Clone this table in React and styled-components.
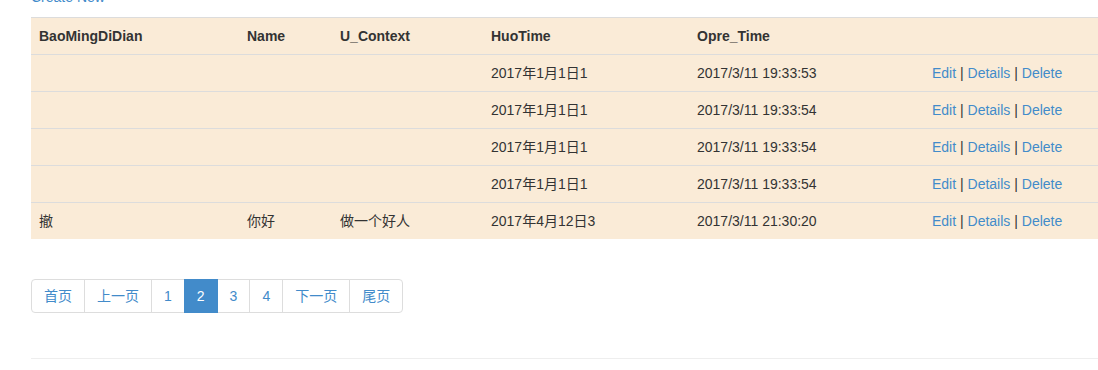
import styled, { createGlobalStyle } from "styled-components";

const GlobalStyle = createGlobalStyle`
  html, body {
    margin: 0;
    padding: 0;
    background: #fff;
    overflow: hidden;
  }
  body {
    font-family: "Liberation Sans", Arial, "Noto Sans CJK SC", sans-serif;
    font-size: 14px;
    line-height: 1.42857143;
    color: #333;
  }
`;

const columns = [
  { key: "place", title: "BaoMingDiDian", width: 208 },
  { key: "name", title: "Name", width: 93 },
  { key: "context", title: "U_Context", width: 151 },
  { key: "huo", title: "HuoTime", width: 206 },
  { key: "opre", title: "Opre_Time", width: 235 },
  { key: "actions", title: "" },
];

const rows = [
  { id: 1, place: "", name: "", context: "", huo: "2017年1月1日1", opre: "2017/3/11 19:33:53" },
  { id: 2, place: "", name: "", context: "", huo: "2017年1月1日1", opre: "2017/3/11 19:33:54" },
  { id: 3, place: "", name: "", context: "", huo: "2017年1月1日1", opre: "2017/3/11 19:33:54" },
  { id: 4, place: "", name: "", context: "", huo: "2017年1月1日1", opre: "2017/3/11 19:33:54" },
  { id: 5, place: "撤", name: "你好", context: "做一个好人", huo: "2017年4月12日3", opre: "2017/3/11 21:30:20" },
];

const pages = [
  { label: "首页" },
  { label: "上一页" },
  { label: "1" },
  { label: "2", active: true },
  { label: "3" },
  { label: "4" },
  { label: "下一页" },
  { label: "尾页" },
];

const App = () => {
  return (
    <>
      <GlobalStyle />
      <Page>
        <TopLink>
          <Link href="#">Create New</Link>
        </TopLink>
        <Table>
          <thead>
            <tr>
              {columns.map((c) => (
                <Th key={c.key} $width={c.width}>
                  {c.title}
                </Th>
              ))}
            </tr>
          </thead>
          <tbody>
            {rows.map((r) => (
              <tr key={r.id}>
                <Td>{r.place}</Td>
                <Td>{r.name}</Td>
                <Td>{r.context}</Td>
                <Td>{r.huo}</Td>
                <Td>{r.opre}</Td>
                <Td>
                  <Link href="#">Edit</Link> | <Link href="#">Details</Link> |{" "}
                  <Link href="#">Delete</Link>
                </Td>
              </tr>
            ))}
          </tbody>
        </Table>
        <Pagination>
          {pages.map((p) => (
            <PageItem key={p.label} $active={p.active}>
              {p.label}
            </PageItem>
          ))}
        </Pagination>
        <Rule />
      </Page>
    </>
  );
};

export default App;

const Page = styled.div`
  margin-top: -13px;
  padding-left: 31px;
  width: 1098px;
  box-sizing: border-box;
`;

const TopLink = styled.p`
  margin: 0 0 10px;
`;

const Link = styled.a`
  color: #428bca;
  text-decoration: none;
`;

const Table = styled.table`
  width: 100%;
  table-layout: fixed;
  border-collapse: collapse;
  border-spacing: 0;
  background: #faebd7;
  border-top: 1px solid #dcdcdc;
`;

const Th = styled.th`
  box-sizing: border-box;
  width: ${(p) => (p.$width ? `${p.$width}px` : "auto")};
  text-align: left;
  font-weight: bold;
  padding: 8px;
  line-height: 20px;
  border-bottom: 1px solid #dcdcdc;
  white-space: nowrap;
  vertical-align: bottom;
`;

const Td = styled.td`
  padding: 8px;
  height: 20px;
  line-height: 20px;
  border-top: 1px solid #dcdcdc;
  white-space: nowrap;
  vertical-align: top;

  tr:first-child > & {
    border-top: 0;
  }
`;

const Pagination = styled.ul`
  display: flex;
  margin: 40px 0 20px;
  padding: 0;
  list-style: none;
`;

const PageItem = styled.li`
  padding: 6px 12px;
  line-height: 20px;
  margin-left: -1px;
  border: 1px solid ${(p) => (p.$active ? "#428bca" : "#ddd")};
  background: ${(p) => (p.$active ? "#428bca" : "#fff")};
  color: ${(p) => (p.$active ? "#fff" : "#428bca")};
  position: relative;
  z-index: ${(p) => (p.$active ? 2 : 0)};

  &:first-child {
    margin-left: 0;
    border-radius: 4px 0 0 4px;
  }
  &:last-child {
    border-radius: 0 4px 4px 0;
  }
`;

const Rule = styled.hr`
  margin: 45px 0 0;
  border: 0;
  border-top: 1px solid #eee;
`;
